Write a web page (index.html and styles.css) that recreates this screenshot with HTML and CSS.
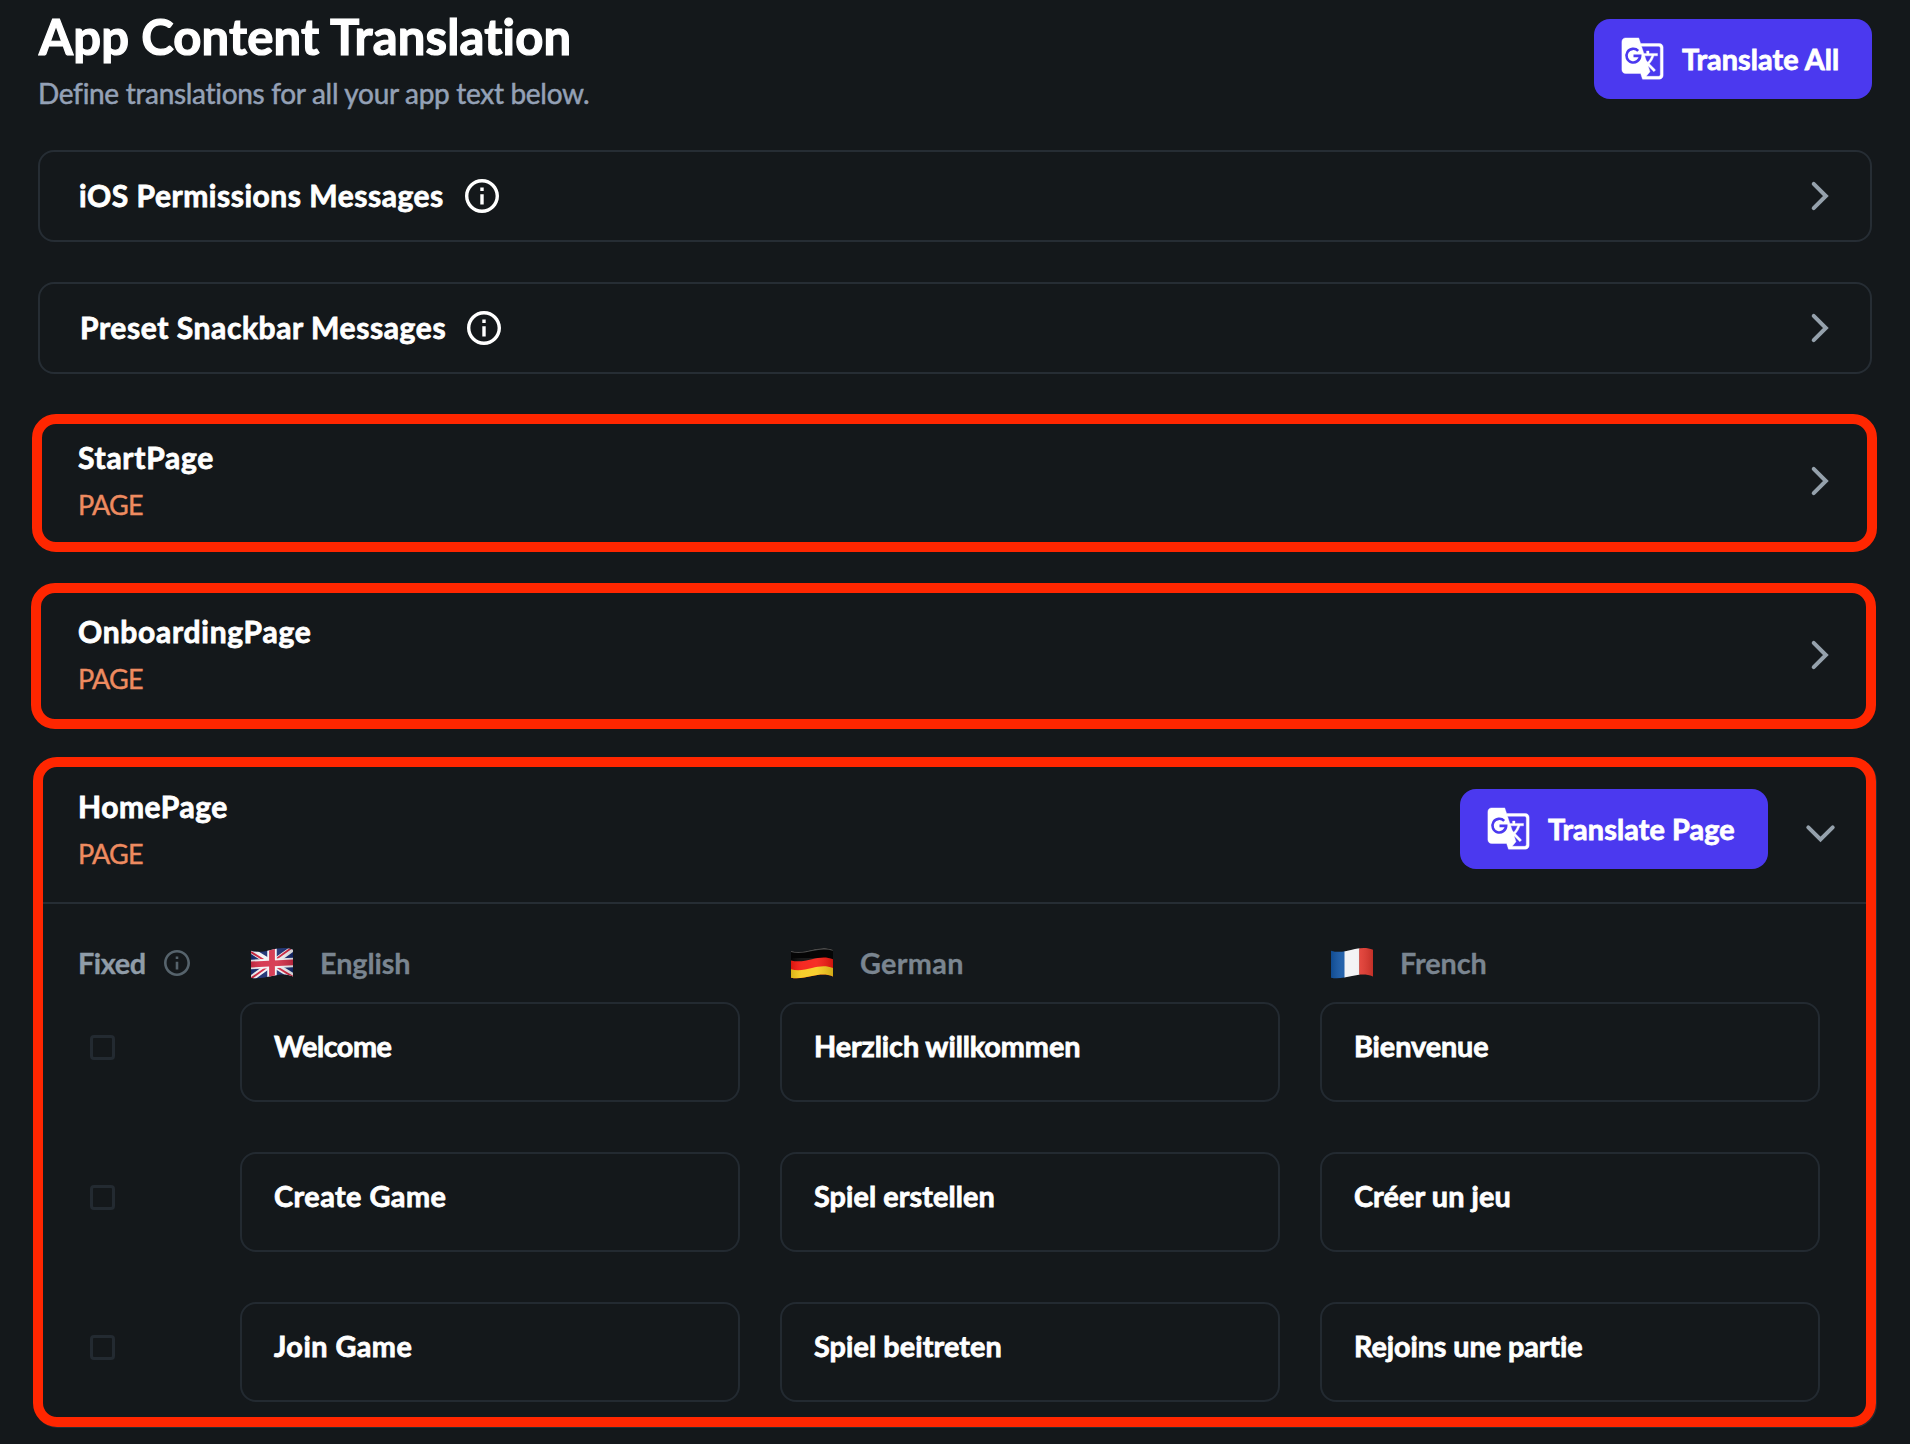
FILE: index.html
```html
<!DOCTYPE html>
<html lang="en">
<head>
<meta charset="utf-8">
<title>App Content Translation</title>
<link rel="stylesheet" href="styles.css">
</head>
<body>
<svg class="defs" width="0" height="0" aria-hidden="true">
  <defs>
    <symbol id="g-translate" viewBox="0 0 24 24">
      <path fill="currentColor" stroke="currentColor" stroke-width=".2" d="M21 4H11l-1-3H3c-1.1 0-2 .9-2 2v15c0 1.1.9 2 2 2h8l1 3h9c1.1 0 2-.9 2-2V6c0-1.1-.9-2-2-2zM13.170 10.580h3.7c-.43 1.25-1.11 2.43-2.05 3.47-.31-.35-.6-.72-.86-1.1l-.79-2.37zm8.33 9.92c0 .55-.45 1-1 1H14l2-2.5-1.04-3.1 3.1 3.1.92-.92-3.3-3.25.02-.02c1.13-1.25 1.93-2.69 2.4-4.22H20v-1.3h-4.53V8h-1.29v1.29h-1.44L11.46 5.5h9.04c.55 0 1 .45 1 1v14z"/>
      <path class="cutout" d="M9.700 7.900A3.650 3.650 0 1 0 10.750 10.600H7.200"/>
    </symbol>
    <symbol id="info" viewBox="2 2 20 20">
      <path fill="currentColor" d="M11 7h2v2h-2zm0 4h2v6h-2zm1-9C6.48 2 2 6.480 2 12s4.480 10 10 10 10-4.480 10-10S17.520 2 12 2zm0 18c-4.410 0-8-3.590-8-8s3.590-8 8-8 8 3.590 8 8-3.590 8-8 8z"/>
    </symbol>
    <symbol id="chevron-right" viewBox="0 0 40 40">
      <polyline points="13.7,7.8 25.9,20 13.7,32.2" fill="none" stroke="currentColor" stroke-width="4" stroke-linecap="round"/>
    </symbol>
    <symbol id="chevron-down" viewBox="0 0 40 40">
      <polyline points="8.3,14.3 20.500,26.500 32.700,14.3" fill="none" stroke="currentColor" stroke-width="4" stroke-linecap="round"/>
    </symbol>
    <clipPath id="wave"><path d="M0 2.7C7 5 14 3.500 21 1.800S35-1 42 1.700V28.500C35 25.500 28 26.500 21 28S7 31.200 0 29.800Z"/></clipPath>
    <linearGradient id="sheen" x1="0" x2="1" y1="0" y2="0">
      <stop offset="0" stop-color="#000" stop-opacity=".12"/>
      <stop offset=".25" stop-color="#fff" stop-opacity=".08"/>
      <stop offset=".6" stop-color="#fff" stop-opacity=".1"/>
      <stop offset="1" stop-color="#000" stop-opacity=".16"/>
    </linearGradient>
  </defs>
</svg>

<main class="page">
  <header class="page-header">
    <div>
      <h1 class="title">App Content Translation</h1>
      <p class="subtitle">Define translations for all your app text below.</p>
    </div>
    <button class="btn"><svg class="btn-icon"><use href="#g-translate"/></svg><span class="btn-label">Translate All</span></button>
  </header>

  <section class="card">
    <h2 class="card-title">iOS Permissions Messages</h2>
    <svg class="info"><use href="#info"/></svg>
    <svg class="chevron"><use href="#chevron-right"/></svg>
  </section>

  <section class="card preset">
    <h2 class="card-title">Preset Snackbar Messages</h2>
    <svg class="info"><use href="#info"/></svg>
    <svg class="chevron"><use href="#chevron-right"/></svg>
  </section>

  <section class="marked start">
    <div class="page-row">
      <div class="names"><h2 class="name wide">StartPage</h2><p class="kind">PAGE</p></div>
      <svg class="chevron"><use href="#chevron-right"/></svg>
    </div>
  </section>

  <section class="marked onboarding">
    <div class="page-row">
      <div class="names"><h2 class="name wide">OnboardingPage</h2><p class="kind">PAGE</p></div>
      <svg class="chevron"><use href="#chevron-right"/></svg>
    </div>
  </section>

  <section class="marked home">
    <div class="page-row">
      <div class="names"><h2 class="name">HomePage</h2><p class="kind">PAGE</p></div>
      <button class="btn"><svg class="btn-icon"><use href="#g-translate"/></svg><span class="btn-label page-label">Translate Page</span></button>
      <svg class="chevron down"><use href="#chevron-down"/></svg>
    </div>

    <div class="languages grid">
      <div class="fixed"><span class="fixed-label">Fixed</span><svg class="info-small"><use href="#info"/></svg></div>
      <div class="language">
        <svg class="flag" viewBox="0 0 42 31">
          <g clip-path="url(#wave)">
            <rect width="42" height="31" fill="#14296f"/>
            <g transform="matrix(1 -.05 0 1 0 1)">
              <path d="M0 1.500L42 29.500M0 29.500L42 1.500" stroke="#f3f3f6" stroke-width="6"/>
              <path d="M0 3L21 17M21 14L42 0M0 29.500L21 15.500M21 16L42 30" stroke="#d0203c" stroke-width="1.900"/>
              <path d="M21-3V35M-2 15.500H44" stroke="#f3f3f6" stroke-width="9.500"/>
              <path d="M21-3V35M-2 15.500H44" stroke="#d32c46" stroke-width="5.800"/>
            </g>
            <rect width="42" height="31" fill="url(#sheen)"/>
          </g>
        </svg>
        <span class="language-name">English</span>
      </div>
      <div class="language">
        <svg class="flag" viewBox="0 0 42 31">
          <g clip-path="url(#wave)">
            <rect width="42" height="31" fill="#050505"/>
            <path d="M0 3.200C7 5.500 14 4 21 2.300S35-.5 42 2.200" fill="none" stroke="#4a4a4a" stroke-width="1.400"/>
            <path d="M0 12.400C7 14.400 14 12.900 21 11.200S35 8.500 42 11.200V31H0Z" fill="#f5180f"/>
            <path d="M0 21.200C7 23.200 14 21.700 21 20S35 17.300 42 20V31H0Z" fill="#f8cb1a"/>
            <rect y="10" width="42" height="21" fill="url(#sheen)"/>
          </g>
        </svg>
        <span class="language-name german">German</span>
      </div>
      <div class="language">
        <svg class="flag" viewBox="0 0 42 31">
          <g clip-path="url(#wave)">
            <rect width="14" height="31" fill="#1255a4"/>
            <rect x="13.500" width="15" height="31" fill="#f2f2f4"/>
            <rect x="28.300" width="14" height="31" fill="#e8392f"/>
            <rect width="42" height="31" fill="url(#sheen)"/>
          </g>
        </svg>
        <span class="language-name">French</span>
      </div>
    </div>

    <div class="rows">
      <div class="grid">
        <span class="checkbox"></span>
        <div class="field tight">Welcome</div>
        <div class="field">Herzlich willkommen</div>
        <div class="field">Bienvenue</div>
      </div>
      <div class="grid">
        <span class="checkbox"></span>
        <div class="field loose">Create Game</div>
        <div class="field spiel">Spiel erstellen</div>
        <div class="field spiel">Créer un jeu</div>
      </div>
      <div class="grid">
        <span class="checkbox"></span>
        <div class="field loose">Join Game</div>
        <div class="field spiel">Spiel beitreten</div>
        <div class="field">Rejoins une partie</div>
      </div>
    </div>
  </section>
</main>
</body>
</html>
```
FILE: styles.css
```css
* { box-sizing: border-box; }

body {
  margin: 0;
  background: #14181b;
  color: #fff;
  font-family: Lato, "Open Sans", sans-serif;
  font-size: 28.8px;
  line-height: 36px;
  white-space: nowrap;
}

h1, h2, p { margin: 0; }
svg { display: block; flex: none; }
.defs { position: absolute; }

.page {
  height: 1444px;
  overflow: hidden;
}

.page-header {
  display: flex;
  justify-content: space-between;
  align-items: flex-start;
  height: 150px;
  padding: 6px 38px 0 39px;
}

.title {
  font-size: 49px;
  line-height: 60px;
  font-weight: 700;
  letter-spacing: 0.16px;
  -webkit-text-stroke: 1.2px #fff;
}

.subtitle {
  margin: 9px 0 0 -1px;
  color: #94a1b6;
  font-size: 28px;
  letter-spacing: -0.31px;
  -webkit-text-stroke: 0.5px #94a1b6;
}

.btn {
  display: flex;
  align-items: center;
  flex: none;
  height: 80px;
  padding: 0 0 0 25px;
  border: 0;
  border-radius: 16px;
  background: #4b39ef;
  color: #fff;
  font: 700 28.8px/36px Lato, "Open Sans", sans-serif;
}

.page-header .btn { width: 278px; margin-top: 13px; }
.home .btn { width: 308px; }
.btn-icon { width: 45px; height: 45px; margin: 0 17px 1px 1px; }
.cutout { fill: none; stroke: #4b39ef; stroke-width: 1.4; }
.btn-label { padding-bottom: 1px; letter-spacing: 0.07px; -webkit-text-stroke: 0.8px #fff; }
.page-label { letter-spacing: 0.1px; }

.card {
  display: flex;
  align-items: center;
  height: 92px;
  margin: 0 38px 40px 38px;
  padding: 0 30px 0 39px;
  border: 2px solid #262d34;
  border-radius: 16px;
}

.card-title, .name {
  font-size: 30px;
  line-height: 36px;
  font-weight: 700;
  letter-spacing: 0.53px;
  -webkit-text-stroke: 0.8px #fff;
}

.card-title { width: 386px; padding-bottom: 3px; }
.preset .card-title { width: 388px; padding-left: 1px; letter-spacing: 0.6px; }
.info { width: 34px; height: 34px; }
.chevron { width: 40px; height: 40px; margin-left: auto; color: #95a1ac; }

.marked {
  border: 10px solid #ff2600;
  border-radius: 24px;
}

.start { height: 138px; margin: 0 33px 31px 32px; padding: 15px 27px 0 36px; }
.onboarding { height: 146px; margin: 0 34px 28px 31px; padding: 20px 26px 0 37px; }
.home { height: 670px; margin: 0 34px 0 33px; box-shadow: 1px 1px 0 #262d34; }

.page-row { display: flex; align-items: center; height: 84px; }
.names { padding-bottom: 2px; }
.wide { letter-spacing: 0.73px; }
.kind {
  margin-top: 14px;
  color: #ee8b60;
  font-size: 27px;
  line-height: 32px;
  letter-spacing: -0.8px;
  -webkit-text-stroke: 0.4px #ee8b60;
}

.home .page-row {
  height: 137px;
  padding: 0 26px 11px 35px;
  border-bottom: 2px solid #262d34;
}
.home .names { padding-bottom: 1px; }
.home .btn { margin-left: auto; }
.home .down { margin: 8px 0 0 32px; }

.grid {
  display: grid;
  grid-template-columns: 123px 500px 500px 500px;
  column-gap: 40px;
  padding-left: 34px;
}

.languages { padding-top: 37px; }
.rows .grid { height: 100px; }

.fixed, .language {
  display: flex;
  align-items: center;
  height: 44px;
  font-weight: 700;
}
.fixed-label {
  width: 87px;
  padding: 0 0 1px 1px;
  color: #8f9ca8;
  letter-spacing: -0.4px;
  -webkit-text-stroke: 0.4px #8f9ca8;
}
.info-small { width: 26px; height: 26px; color: #56636c; }
.language { padding-left: 11px; color: #7a8590; }
.flag { width: 42px; height: 31px; margin-right: 27px; }
.language-name { padding-bottom: 1px; letter-spacing: -0.1px; -webkit-text-stroke: 0.3px #7a8590; }
.german { letter-spacing: 0.34px; }

.rows {
  display: flex;
  flex-direction: column;
  gap: 50px;
  padding-top: 17px;
}

.checkbox {
  width: 25px;
  height: 25px;
  margin: 33px 0 0 12.5px;
  border: 3px solid #232a31;
  border-radius: 4px;
}

.field {
  height: 100px;
  padding: 24px 30px 0 32px;
  border: 2px solid #232a31;
  border-radius: 16px;
  font-weight: 700;
  letter-spacing: -0.08px;
  -webkit-text-stroke: 0.8px #fff;
}
.tight { letter-spacing: -0.45px; }
.loose { letter-spacing: 0.48px; }
.spiel { letter-spacing: 0.1px; }
```
